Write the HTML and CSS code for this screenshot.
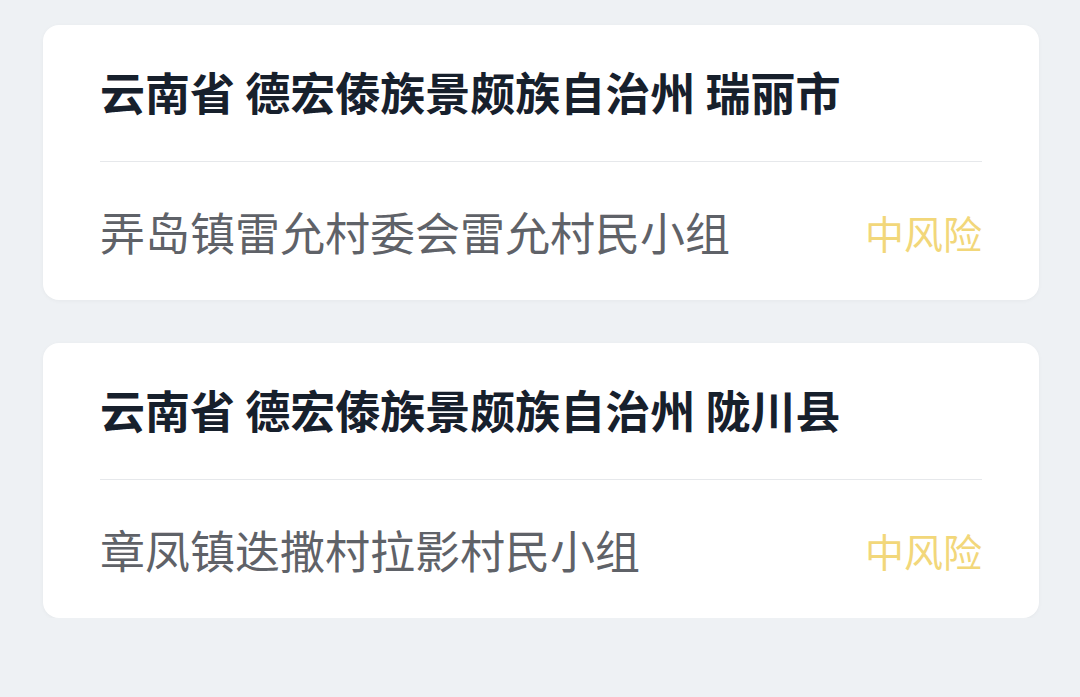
FILE: index.html
```html
<!DOCTYPE html>
<html lang="zh-CN">
<head>
    <meta charset="UTF-8">
    <meta name="viewport" content="width=device-width, initial-scale=1.0">
    <title>风险地区</title>
    <link rel="stylesheet" href="styles.css">
</head>
<body>
    <div class="list">
        <div class="card">
            <div class="card-title">云南省 德宏傣族景颇族自治州 瑞丽市</div>
            <div class="card-row">
                <span class="place">弄岛镇雷允村委会雷允村民小组</span>
                <span class="level">中风险</span>
            </div>
        </div>
        <div class="card">
            <div class="card-title">云南省 德宏傣族景颇族自治州 陇川县</div>
            <div class="card-row">
                <span class="place">章凤镇迭撒村拉影村民小组</span>
                <span class="level">中风险</span>
            </div>
        </div>
    </div>
</body>
</html>
```

FILE: styles.css
```css
body {
    margin: 0;
    padding: 0;
    background: #eef1f4;
    font-family: 'Noto Sans CJK SC', 'Noto Sans', sans-serif;
}
.list {
    padding: 25px 41px 0 43px;
    display: flex;
    flex-direction: column;
    gap: 43px;
}
.card {
    background: #ffffff;
    border-radius: 16px;
    padding: 0 57px;
    box-shadow: 0 1px 4px rgba(0, 0, 0, 0.04);
}
.card-title {
    font-size: 45px;
    font-weight: bold;
    color: #17202c;
    line-height: 60px;
    padding: 37px 0 39px;
    border-bottom: 1px solid #e6e8eb;
}
.card-row {
    display: flex;
    justify-content: space-between;
    align-items: center;
    line-height: 60px;
    padding: 40px 0 38px;
}
.place {
    font-size: 45px;
    color: #5f6268;
}
.level {
    font-size: 39px;
    color: #f2d77a;
}
```
